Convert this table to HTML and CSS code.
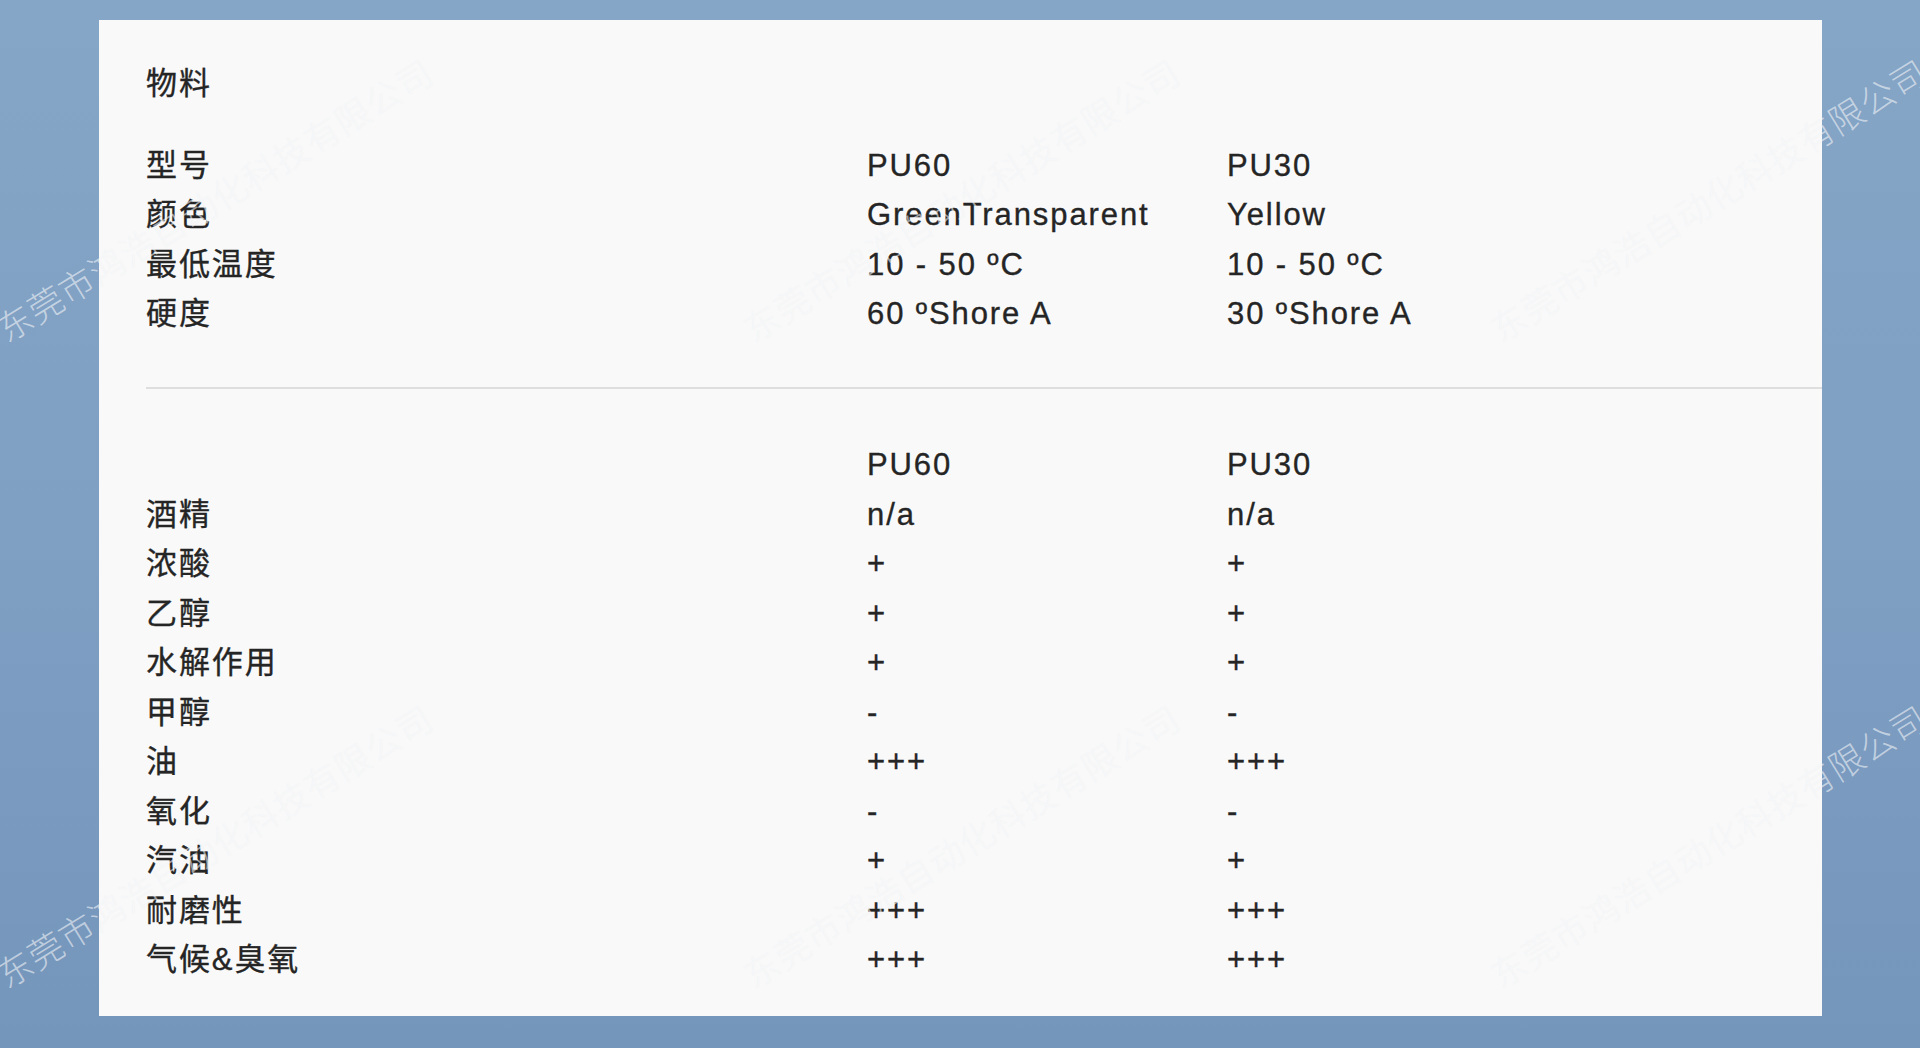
FILE: index.html
```html
<!DOCTYPE html>
<html lang="zh-CN">
<head>
<meta charset="utf-8">
<title>物料</title>
<link rel="stylesheet" href="styles.css">
</head>
<body>
<main class="card">
  <h2 class="title">物料</h2>
  <section class="table first">
    <div class="row"><span class="label">型号</span><span class="val">PU60</span><span class="val">PU30</span></div>
    <div class="row"><span class="label">颜色</span><span class="val">GreenTransparent</span><span class="val">Yellow</span></div>
    <div class="row"><span class="label">最低温度</span><span class="val">10 - 50 ºC</span><span class="val">10 - 50 ºC</span></div>
    <div class="row"><span class="label">硬度</span><span class="val">60 ºShore A</span><span class="val">30 ºShore A</span></div>
  </section>
  <hr class="divider">
  <section class="table second">
    <div class="row"><span class="label"></span><span class="val">PU60</span><span class="val">PU30</span></div>
    <div class="row"><span class="label">酒精</span><span class="val">n/a</span><span class="val">n/a</span></div>
    <div class="row"><span class="label">浓酸</span><span class="val">+</span><span class="val">+</span></div>
    <div class="row"><span class="label">乙醇</span><span class="val">+</span><span class="val">+</span></div>
    <div class="row"><span class="label">水解作用</span><span class="val">+</span><span class="val">+</span></div>
    <div class="row"><span class="label">甲醇</span><span class="val">-</span><span class="val">-</span></div>
    <div class="row"><span class="label">油</span><span class="val">+++</span><span class="val">+++</span></div>
    <div class="row"><span class="label">氧化</span><span class="val">-</span><span class="val">-</span></div>
    <div class="row"><span class="label">汽油</span><span class="val">+</span><span class="val">+</span></div>
    <div class="row"><span class="label">耐磨性</span><span class="val">+++</span><span class="val">+++</span></div>
    <div class="row"><span class="label">气候&amp;臭氧</span><span class="val">+++</span><span class="val">+++</span></div>
  </section>
</main>
<div class="watermarks" aria-hidden="true">
  <span class="wm wm-a1">东莞市鸿浩自动化科技有限公司</span>
  <span class="wm wm-a2">东莞市鸿浩自动化科技有限公司</span>
  <span class="wm wm-a3">东莞市鸿浩自动化科技有限公司</span>
  <span class="wm wm-b1">东莞市鸿浩自动化科技有限公司</span>
  <span class="wm wm-b2">东莞市鸿浩自动化科技有限公司</span>
  <span class="wm wm-b3">东莞市鸿浩自动化科技有限公司</span>
</div>
</body>
</html>
```

FILE: styles.css
```css
html, body {
  margin: 0;
  padding: 0;
}
body {
  width: 1920px;
  height: 1048px;
  overflow: hidden;
  position: relative;
  background: linear-gradient(180deg, #86a6c7 0%, #7f9fc3 50%, #7596bb 100%);
  font-family: "Liberation Sans", "Noto Sans CJK SC", sans-serif;
  color: #252525;
}
.card {
  box-sizing: border-box;
  margin: 20px 0 0 99px;
  width: 1723px;
  height: 996px;
  background: #f9f9f9;
  padding: 38.5px 0 0 47px;
  font-size: 31px;
  letter-spacing: 1.9px;
  -webkit-text-stroke: 0.35px #252525;
}
.title {
  margin: 0;
  font-size: 31px;
  font-weight: normal;
  line-height: 49.5px;
}
.table {
  display: flex;
  flex-direction: column;
}
.table.first {
  margin-top: 32.5px;
}
.row {
  display: grid;
  grid-template-columns: 721px 360px 1fr;
  line-height: 49.5px;
  height: 49.5px;
  white-space: nowrap;
}
.divider {
  margin: 48px 0 51.5px 0;
  border: 0;
  height: 2px;
  background: #dedede;
}
.watermarks {
  position: absolute;
  inset: 0;
  pointer-events: none;
}
.wm {
  position: absolute;
  width: 520px;
  margin-left: -260px;
  margin-top: -20px;
  text-align: center;
  font-family: "Noto Sans CJK SC", sans-serif;
  font-weight: 300;
  font-size: 35px;
  line-height: 40px;
  letter-spacing: 1px;
  white-space: nowrap;
  color: rgba(255, 255, 255, 0.55);
  text-shadow: 0 0 1px rgba(120, 140, 170, 0.1);
  transform: rotate(-31.5deg);
}
.wm-a1 { left: 214px; top: 199px; }
.wm-a2 { left: 961px; top: 199px; }
.wm-a3 { left: 1708px; top: 199px; }
.wm-b1 { left: 214px; top: 845px; }
.wm-b2 { left: 961px; top: 845px; }
.wm-b3 { left: 1708px; top: 845px; }
```
